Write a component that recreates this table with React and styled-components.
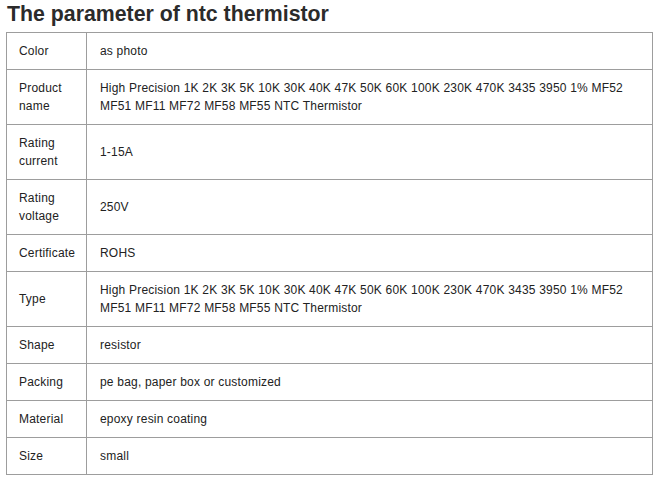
import React from "react";
import styled, { createGlobalStyle } from "styled-components";

const GlobalStyle = createGlobalStyle`
  body {
    margin: 0;
    background: #ffffff;
    font-family: Arial, "Liberation Sans", sans-serif;
  }
`;

const Wrapper = styled.div`
  padding: 1px 0 0 6px;
  width: 647px;
`;

const Title = styled.h2`
  margin: 0 0 5px 1px;
  font-size: 21.3px;
  line-height: 26px;
  font-weight: bold;
  color: #2b2b2b;
`;

const Table = styled.table`
  width: 647px;
  border-collapse: collapse;
  table-layout: fixed;
  font-size: 12px;
  letter-spacing: 0.2px;
  line-height: 18px;
  color: #222222;
`;

const Cell = styled.td`
  border: 1px solid #9d9d9d;
  padding: ${(props) => (props.label ? "9px 12px" : "9px 14px 9px 13px")};
  vertical-align: middle;
  width: ${(props) => (props.label ? "55px" : "auto")};
`;

const rows = [
  ["Color", "as photo"],
  [
    "Product name",
    "High Precision 1K 2K 3K 5K 10K 30K 40K 47K 50K 60K 100K 230K 470K 3435 3950 1% MF52 MF51 MF11 MF72 MF58 MF55 NTC Thermistor",
  ],
  ["Rating current", "1-15A"],
  ["Rating voltage", "250V"],
  ["Certificate", "ROHS"],
  [
    "Type",
    "High Precision 1K 2K 3K 5K 10K 30K 40K 47K 50K 60K 100K 230K 470K 3435 3950 1% MF52 MF51 MF11 MF72 MF58 MF55 NTC Thermistor",
  ],
  ["Shape", "resistor"],
  ["Packing", "pe bag, paper box or customized"],
  ["Material", "epoxy resin coating"],
  ["Size", "small"],
];

const App = () => {
  return (
    <Wrapper>
      <GlobalStyle />
      <Title>The parameter of ntc thermistor</Title>
      <Table>
        <tbody>
          {rows.map(([label, value]) => (
            <tr key={label}>
              <Cell label>{label}</Cell>
              <Cell>{value}</Cell>
            </tr>
          ))}
        </tbody>
      </Table>
    </Wrapper>
  );
};

export default App;
